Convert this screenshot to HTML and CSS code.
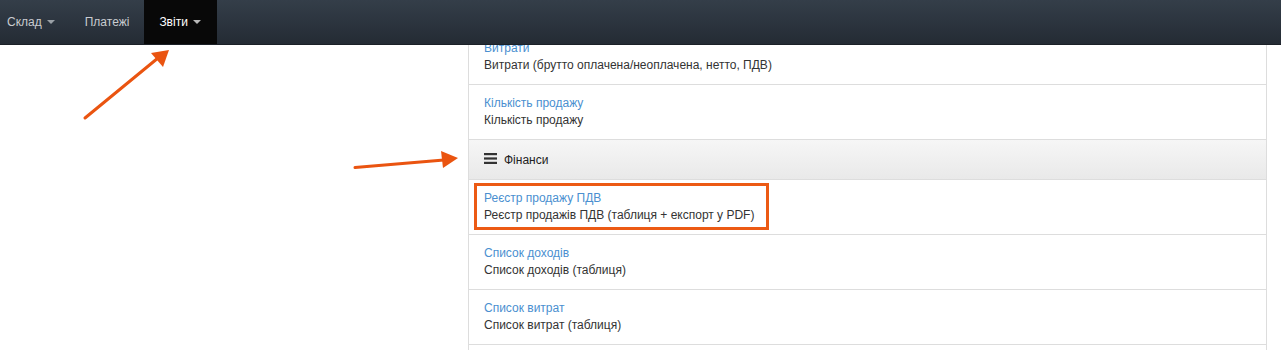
FILE: index.html
```html
<!DOCTYPE html>
<html lang="uk">
<head>
<meta charset="utf-8">
<link rel="stylesheet" href="styles.css">
</head>
<body>
<nav class="navbar">
  <ul class="nav">
    <li class="nav-item first">Склад <span class="caret"></span></li>
    <li class="nav-item">Платежі</li>
    <li class="nav-item active">Звіти <span class="caret"></span></li>
  </ul>
</nav>
<main class="page">
  <div class="panel">
    <div class="row">
      <a class="row-title">Витрати</a>
      <div class="row-desc">Витрати (брутто оплачена/неоплачена, нетто, ПДВ)</div>
    </div>
    <div class="row">
      <a class="row-title">Кількість продажу</a>
      <div class="row-desc">Кількість продажу</div>
    </div>
    <div class="panel-heading">
      <svg class="menu-icon" width="13" height="11" viewBox="0 0 13 11"><rect x="0" y="0" width="13" height="2.2" fill="#333"/><rect x="0" y="4.4" width="13" height="2.2" fill="#333"/><rect x="0" y="8.8" width="13" height="2.2" fill="#333"/></svg>
      <span>Фінанси</span>
    </div>
    <div class="row highlighted">
      <a class="row-title">Реєстр продажу ПДВ</a>
      <div class="row-desc">Реєстр продажів ПДВ (таблиця + експорт у PDF)</div>
      <div class="highlight-box"></div>
    </div>
    <div class="row">
      <a class="row-title">Список доходів</a>
      <div class="row-desc">Список доходів (таблиця)</div>
    </div>
    <div class="row">
      <a class="row-title">Список витрат</a>
      <div class="row-desc">Список витрат (таблиця)</div>
    </div>
    <div class="row">
      <a class="row-title">&nbsp;</a>
      <div class="row-desc">&nbsp;</div>
    </div>
  </div>
</main>
<svg class="arrows" width="1281" height="350" viewBox="0 0 1281 350">
  <line x1="85" y1="118" x2="158" y2="58" stroke="#ea5410" stroke-width="3" stroke-linecap="round"/>
  <polygon points="169,50 151,53 163,67" fill="#ea5410"/>
  <line x1="355" y1="167.5" x2="444" y2="160" stroke="#ea5410" stroke-width="3" stroke-linecap="round"/>
  <polygon points="458,158 441,151 443,168" fill="#ea5410"/>
</svg>
</body>
</html>
```
FILE: styles.css
```css
html, body {
  margin: 0;
  padding: 0;
  background: #fff;
  font-family: "Liberation Sans", Arial, sans-serif;
  font-size: 12px;
  color: #333;
}
.navbar {
  position: fixed;
  top: 0;
  left: 0;
  right: 0;
  height: 44px;
  background: linear-gradient(#343e49, #242b34);
  border-bottom: 1px solid #1b2027;
  z-index: 10;
}
.nav {
  list-style: none;
  margin: 0;
  padding: 0;
  display: flex;
  height: 44px;
}
.nav-item {
  display: flex;
  align-items: center;
  padding: 0 15px;
  color: #c9ccd0;
  line-height: 44px;
}
.nav-item.first {
  padding-left: 7px;
  padding-right: 15px;
}
.nav-item.active {
  background: #080808;
  color: #fff;
  padding-right: 16px;
}
.caret {
  display: inline-block;
  width: 0;
  height: 0;
  margin-left: 5px;
  border-top: 4px solid #9aa0a6;
  border-left: 4px solid transparent;
  border-right: 4px solid transparent;
}
.nav-item.active .caret { border-top-color: #b8b8b8; }
.page {
  padding: 30px 14px 0 468px;
}
.panel {
  border-left: 1px solid #ddd;
  border-right: 1px solid #ddd;
}
.row {
  position: relative;
  padding: 10px 15px;
  border-bottom: 1px solid #ddd;
  line-height: 17px;
}
.row-title {
  display: block;
  color: #4a8fd0;
}
.row-desc {
  color: #333;
}
.panel-heading {
  display: flex;
  align-items: center;
  gap: 7px;
  height: 39px;
  padding: 0 15px;
  border-bottom: 1px solid #ddd;
  background: linear-gradient(#f6f6f6, #e9e9e9);
  color: #222;
}
.menu-icon { display: block; margin-top: -2px; }
.highlight-box {
  position: absolute;
  left: 5px;
  top: 3px;
  width: 289px;
  height: 41px;
  border: 3px solid #ec5a14;
  pointer-events: none;
}
.arrows {
  position: absolute;
  left: 0;
  top: 0;
  z-index: 20;
  pointer-events: none;
}
```
